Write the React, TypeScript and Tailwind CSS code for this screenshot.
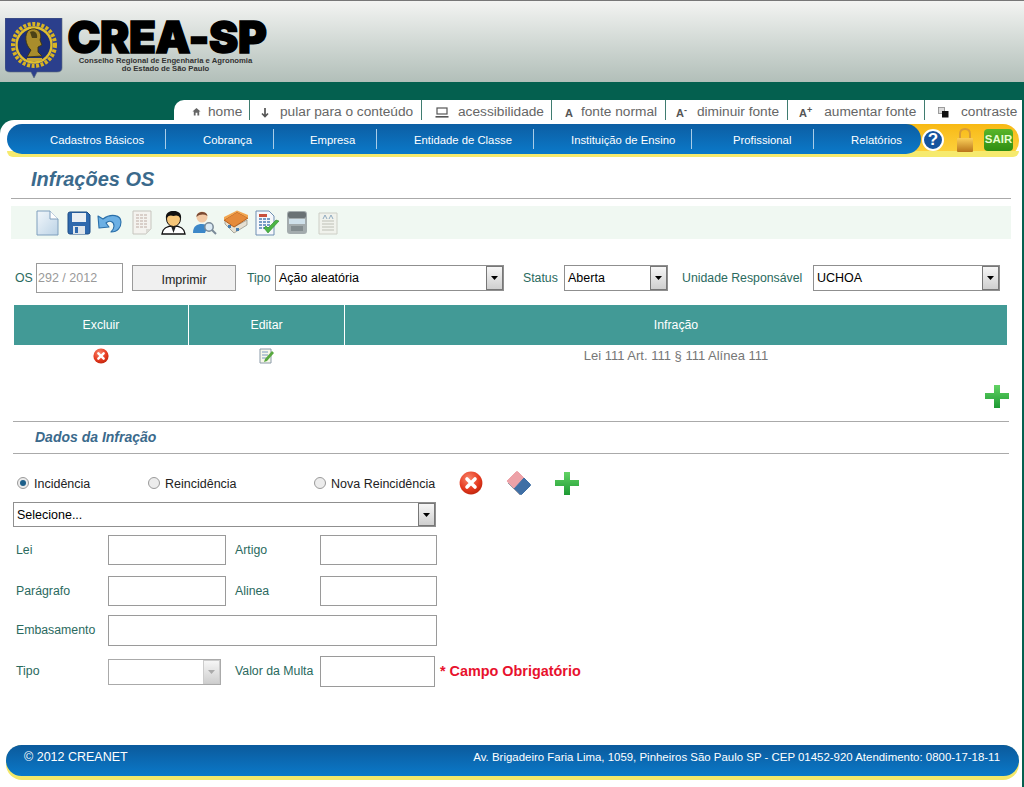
import React from 'react';

const font = { fontFamily: '"Liberation Sans", Arial, sans-serif' };

const tabs = [
  { label: 'home', w: 'w-[76px]', pl: 'pl-[18px]', gap: 'gap-[7px]', icon: 'home' },
  { label: 'pular para o conteúdo', w: 'w-[172px]', pl: 'pl-[10px]', gap: 'gap-[10px]', icon: 'down' },
  { label: 'acessibilidade', w: 'w-[130px]', pl: 'pl-[13px]', gap: 'gap-[9px]', icon: 'laptop' },
  { label: 'fonte normal', w: 'w-[114px]', pl: 'pl-[13px]', gap: 'gap-[8px]', icon: 'A' },
  { label: 'diminuir fonte', w: 'w-[122px]', pl: 'pl-[10px]', gap: 'gap-[10px]', icon: 'A-' },
  { label: 'aumentar fonte', w: 'w-[137px]', pl: 'pl-[11px]', gap: 'gap-[12px]', icon: 'A+' },
  { label: 'contraste', w: 'w-[97px]', pl: 'pl-[13px]', gap: 'gap-[12px]', icon: 'contrast' },
];

const menu = [
  { label: 'Cadastros Básicos', w: 'w-[159px]', pl: 'pl-[43px]' },
  { label: 'Cobrança', w: 'w-[108px]', pl: 'pl-[37px]' },
  { label: 'Empresa', w: 'w-[103px]', pl: 'pl-[36px]' },
  { label: 'Entidade de Classe', w: 'w-[157px]', pl: 'pl-[37px]' },
  { label: 'Instituição de Ensino', w: 'w-[158px]', pl: 'pl-[37px]' },
  { label: 'Profissional', w: 'w-[122px]', pl: 'pl-[41px]' },
  { label: 'Relatórios', w: 'w-[107px]', pl: 'pl-[37px]' },
];

const TabIcon = ({ name }: { name: string }) => {
  if (name === 'home')
    return (
      <svg width="9" height="9" viewBox="0 0 10 10" className="mt-[7px]">
        <path d="M0.5 5 L5 1 L9.5 5 L8 5 L8 9.5 L6 9.5 L6 6.5 L4 6.5 L4 9.5 L2 9.5 L2 5 Z" fill="#666" />
      </svg>
    );
  if (name === 'down')
    return (
      <svg width="10" height="11" viewBox="0 0 10 11" className="mt-[7px]">
        <path d="M5 1 V9 M2 6.5 L5 9.5 L8 6.5" stroke="#555" strokeWidth="1.7" fill="none" />
      </svg>
    );
  if (name === 'laptop')
    return (
      <svg width="14" height="11" viewBox="0 0 14 11" className="mt-[7px]">
        <rect x="2" y="1" width="10" height="6" fill="none" stroke="#555" strokeWidth="1.2" />
        <rect x="0.5" y="9" width="13" height="1.6" fill="#555" />
      </svg>
    );
  if (name === 'contrast')
    return (
      <svg width="11" height="11" viewBox="0 0 11 11" className="mt-[7px]">
        <rect x="0.5" y="0.5" width="6" height="6" fill="#ddd" stroke="#888" strokeWidth="0.8" />
        <rect x="4" y="4" width="6.5" height="6.5" fill="#111" />
      </svg>
    );
  return (
    <span className="mt-[7px] text-[11px] leading-[13px] font-bold text-[#555]">
      A{name === 'A-' ? <sup className="text-[9px] leading-none">-</sup> : null}
      {name === 'A+' ? <sup className="text-[9px] leading-none">+</sup> : null}
    </span>
  );
};

const Emblem = () => (
  <svg width="58" height="62" viewBox="0 0 58 62" className="shrink-0">
    <path d="M0 0 H57 V50 Q57 54 52 54 H32 L29 60 L26 54 H5 Q0 54 0 50 Z" fill="#2b3f8c" stroke="#5a6a7a" strokeWidth="0.6" />
    <circle cx="29" cy="27" r="21" fill="none" stroke="#d9b422" strokeWidth="4" strokeDasharray="3 1.6" />
    <circle cx="29" cy="27" r="17.5" fill="#1c2f78" stroke="#e0bf2e" strokeWidth="2.4" />
    <path d="M24 12 C32 8 38 15 35 22 L37 27 L33 29 L33 34 L37 38 L22 39 L26 32 C20 27 19 16 24 12 Z" fill="#a98d2c" stroke="#3b3413" strokeWidth="0.9" />
    <path d="M25 14 C29 12 33 15 32 20 L27 20 Z" fill="#4b4216" />
    <path d="M22 40 H37 V43 H22 Z" fill="#c9a93a" />
  </svg>
);

const DocIcon = () => (
  <svg width="23" height="26" viewBox="0 0 23 26">
    <defs>
      <linearGradient id="docg" x1="0" y1="0" x2="1" y2="1">
        <stop offset="0" stopColor="#f2f7fb" />
        <stop offset="1" stopColor="#bcd3e6" />
      </linearGradient>
    </defs>
    <path d="M1 1 H14 L22 9 V25 H1 Z" fill="url(#docg)" stroke="#7f9fbd" />
    <path d="M14 1 V9 H22" fill="#fff" stroke="#7f9fbd" />
  </svg>
);

const SaveIcon = () => (
  <svg width="24" height="24" viewBox="0 0 24 24">
    <path d="M1 3 Q1 1 3 1 H20 L23 4 V21 Q23 23 21 23 H3 Q1 23 1 21 Z" fill="#2f69ad" stroke="#1d4c85" />
    <rect x="5" y="2" width="14" height="9" fill="#e9eef3" />
    <rect x="6" y="15" width="12" height="8" fill="#dfe5ea" />
    <rect x="8" y="16" width="3" height="6" fill="#2f69ad" />
  </svg>
);

const UndoIcon = () => (
  <svg width="25" height="22" viewBox="0 0 25 22">
    <path d="M1 4 L2 16 L12 15 L9 11 C12 8 17 9 17 14 C17 16 16 18 14 20 C21 20 24 15 24 10 C24 3 14 1 6 7 Z" fill="#6cb0e4" stroke="#2a6fa9" strokeWidth="1.1" strokeLinejoin="round" />
  </svg>
);

const SheetIcon = () => (
  <svg width="22" height="25" viewBox="0 0 22 25" opacity="0.8">
    <path d="M2 1 H20 V19 L15 24 H2 Z" fill="#f5f3ef" stroke="#bdb9b2" />
    {[5, 8, 11, 14, 17].map((y) => (
      <path key={y} d={`M5 ${y} H17`} stroke="#c9b8b0" strokeWidth="1.4" strokeDasharray="3 1" />
    ))}
    <path d="M15 24 V19 H20 Z" fill="#d8d5cf" />
  </svg>
);

const PersonIcon = () => (
  <svg width="25" height="25" viewBox="0 0 25 25">
    <path d="M1 24 C2 17 7 16 12.5 16 C18 16 23 17 24 24 Z" fill="#fff" stroke="#111" strokeWidth="1.4" />
    <path d="M10 16 L12.5 23 L15 16 Z" fill="#222" />
    <ellipse cx="12.5" cy="9" rx="7" ry="7.5" fill="#f6c679" stroke="#111" />
    <path d="M5 9 C4 2 9 1 12.5 1 C17 1 21 3 20 9 C18 5 15 5 12.5 6 C10 5 7 5 5 9 Z" fill="#111" />
  </svg>
);

const UserSearchIcon = () => (
  <svg width="25" height="25" viewBox="0 0 25 25">
    <circle cx="10" cy="7" r="5.5" fill="#f2c9a5" />
    <path d="M4.5 7 C4 1 15 0 15.5 6 C12 4 8 4 4.5 7 Z" fill="#7a4a33" />
    <path d="M1 23 C1 16 5 14 10 14 C13 14 15 15 16 16 L13 23 Z" fill="#3c87c8" />
    <circle cx="17" cy="17" r="4.2" fill="#dcebf5" stroke="#7a8a98" strokeWidth="1.5" />
    <path d="M20 20 L24 24" stroke="#7a8a98" strokeWidth="2" />
  </svg>
);

const HouseIcon = () => (
  <svg width="26" height="25" viewBox="0 0 26 25">
    <path d="M2 14 L11 23 L24 15 V10 L11 17 L2 9 Z" fill="#e6e0d2" stroke="#8b8b80" strokeWidth="0.7" />
    <path d="M1 10 L14 2 L25 8 L11 17 Z" fill="#e58a3a" stroke="#b65e1c" />
    <path d="M1 7 L14 0.5 L25 5 L25 8 L14 2 L1 10 Z" fill="#f2a650" />
    <rect x="5" y="15" width="3" height="3" fill="#4a7fb0" />
    <rect x="13" y="18" width="3" height="3" fill="#4a7fb0" />
  </svg>
);

const CheckDocIcon = () => (
  <svg width="26" height="26" viewBox="0 0 26 26">
    <path d="M2 1 H15 L20 6 V25 H2 Z" fill="#f6f8fb" stroke="#6f8fb3" />
    <rect x="5" y="4" width="8" height="3" fill="#c9503c" />
    {[9, 12, 15, 18].map((y) => (
      <path key={y} d={`M5 ${y} H16`} stroke="#4f7fb5" strokeWidth="1.4" strokeDasharray="3 1" />
    ))}
    <path d="M10 18 L14 23 L25 11 L22 10 L14 18 L12 16 Z" fill="#4cb544" stroke="#2c8a2b" strokeWidth="0.6" />
  </svg>
);

const DriveIcon = () => (
  <svg width="22" height="25" viewBox="0 0 22 25">
    <rect x="1" y="1" width="20" height="23" rx="3" fill="#a3abad" />
    <rect x="2" y="2" width="18" height="6" rx="2" fill="#6a7275" />
    <rect x="3" y="9" width="16" height="5" fill="#cfe0ea" />
    <rect x="5" y="16" width="12" height="5" fill="#838c8f" />
  </svg>
);

const ReportIcon = () => (
  <svg width="20" height="25" viewBox="0 0 20 25" opacity="0.75">
    <path d="M1 3 H19 V24 H1 Z" fill="#f1f1ea" stroke="#c2c2b8" />
    <path d="M5 9 L7 5 L9 9 M11 9 L13 5 L15 9" stroke="#6f90b0" fill="none" />
    {[11, 14, 17, 20].map((y) => (
      <path key={y} d={`M4 ${y} H16`} stroke="#b9b9ae" strokeWidth="1.2" />
    ))}
  </svg>
);

const RemoveIcon = ({ size }: { size: number }) => (
  <svg width={size} height={size} viewBox="0 0 24 24">
    <defs>
      <radialGradient id="redg" cx="0.4" cy="0.3" r="0.8">
        <stop offset="0" stopColor="#f8856a" />
        <stop offset="0.6" stopColor="#e5391f" />
        <stop offset="1" stopColor="#b32008" />
      </radialGradient>
    </defs>
    <circle cx="12" cy="12" r="11.4" fill="url(#redg)" />
    <path d="M8 8 L16 16 M16 8 L8 16" stroke="#fff" strokeWidth="3.6" strokeLinecap="round" />
  </svg>
);

const PlusIcon = () => (
  <svg width="24" height="24" viewBox="0 0 24 24">
    <defs>
      <linearGradient id="plusg" x1="0" y1="0" x2="0" y2="1">
        <stop offset="0" stopColor="#63d365" />
        <stop offset="1" stopColor="#1d9a33" />
      </linearGradient>
    </defs>
    <path d="M9 1 H15 V9 H24 V15 H15 V24 H9 V15 H0 V9 H9 Z" fill="url(#plusg)" />
  </svg>
);

const EraserIcon = () => (
  <svg width="26" height="26" viewBox="0 0 26 26">
    <path d="M1 11 L10 2 Q11 1 12 2 L18 8 L8 19 Z" fill="#eda2a8" stroke="#eda2a8" strokeLinejoin="round" />
    <path d="M8 19 L18 8 L24 14 Q25 15 24 16 L16 24 Q15 25 14 24 Z" fill="#3f6fa5" stroke="#3f6fa5" strokeLinejoin="round" />
    <path d="M2 13 L8 19 L14 25" stroke="#9a9aa6" fill="none" />
  </svg>
);

const EditIcon = () => (
  <svg width="15" height="16" viewBox="0 0 15 16">
    <path d="M1 1 H12 V15 H1 Z" fill="#f7f7ea" stroke="#8a9aa8" />
    {[4, 7, 10].map((y) => (
      <path key={y} d={`M3 ${y} H9`} stroke="#7a9ac0" />
    ))}
    <path d="M6 11 L13 3 L15 5 L8 13 L5 14 Z" fill="#58a83e" />
  </svg>
);

const Select = ({ value, className, disabled }: { value: string; className: string; disabled?: boolean }) => (
  <div className={`flex items-stretch border border-[#8f8f8f] bg-white ${className}`}>
    <span className="flex-1 pl-[3px] text-[12.5px] leading-[24px] text-black whitespace-nowrap">{value}</span>
    <span
      className={`flex w-[17px] items-center justify-center border ${
        disabled ? 'border-[#ccc]' : 'border-[#777]'
      } bg-gradient-to-b from-[#f6f6f6] to-[#cfcfcf]`}
    >
      <svg width="7" height="4" viewBox="0 0 7 4">
        <path d="M0 0 H7 L3.5 4 Z" fill={disabled ? '#aaa' : '#000'} />
      </svg>
    </span>
  </div>
);

const Radio = ({ checked, label, className }: { checked?: boolean; label: string; className: string }) => (
  <div className={`flex items-center gap-[5px] ${className}`}>
    <span className="-mt-[3px] flex h-[12px] w-[12px] items-center justify-center rounded-full border border-[#9a9a9a] bg-[#ececec]">
      {checked ? <span className="h-[6px] w-[6px] rounded-full bg-[#1d5f8a]" /> : null}
    </span>
    <span className="text-[12.5px] text-[#222]">{label}</span>
  </div>
);

const Label = ({ children, className = '' }: { children: React.ReactNode; className?: string }) => (
  <span className={`text-[12.3px] text-[#2a6a5e] whitespace-nowrap ${className}`}>{children}</span>
);

const Field = ({ className }: { className: string }) => (
  <input className={`border border-[#9a9a9a] bg-white outline-none ${className}`} />
);

export default function App() {
  return (
    <div className="h-[787px] w-[1024px] overflow-hidden bg-[#04604f]" style={font}>
      {/* Header */}
      <header className="flex h-[82px] items-start border-t border-[#777] bg-gradient-to-b from-[#f3f4f2] to-[#b2bfb9] pl-[5px] pt-[17px]">
        <Emblem />
        <div className="ml-[4px] flex w-[200px] flex-col items-center">
          <div className="h-[38px] text-[44px] leading-[38px] font-black tracking-[-0.4px] text-black [font-family:Inter,sans-serif] [-webkit-text-stroke:1.5px_black]">
            CREA-SP
          </div>
          <div className="mt-[1px] -ml-[3px] text-center text-[7.7px] leading-[8px] font-bold text-[#333] whitespace-nowrap">
            Conselho Regional de Engenharia e Agronomia
            <br />
            do Estado de São Paulo
          </div>
        </div>
      </header>

      {/* Links de acessibilidade */}
      <div className="flex h-[38px] justify-end pt-[18px]">
        <nav className="mr-[2px] flex h-[20px] items-stretch rounded-tl-[10px] bg-white">
          {tabs.map((t, i) => (
            <div
              key={t.label}
              className={`flex ${t.w} ${t.pl} ${t.gap} items-start text-[13.7px] leading-[20px] text-[#666] whitespace-nowrap ${
                i < tabs.length - 1 ? 'border-r border-[#3f7c70]' : ''
              }`}
            >
              <TabIcon name={t.icon} />
              <span className="pt-[2px]">{t.label}</span>
            </div>
          ))}
        </nav>
      </div>

      {/* Pagina */}
      <main className="mr-[2px] h-[667px] rounded-tl-[14px] bg-white pt-[4px]">
        <div className="relative mr-[3px] ml-[7px] h-[33px]">
          <div className="absolute inset-y-0 right-0 w-[140px] rounded-r-[16px] bg-gradient-to-b from-[#f8b912] to-[#fdd53f]" />
          <div className="absolute inset-x-0 bottom-0 h-[6px] rounded-b-[14px] bg-[#f6ea6e]" />
          <div className="relative flex h-[30px] w-[914px] items-center rounded-[16px] bg-gradient-to-b from-[#0c5ea3] to-[#0a79c9]">
            {menu.map((m, i) => (
              <div
                key={m.label}
                className={`flex h-[20px] shrink-0 items-center ${m.w} ${m.pl} pt-[2px] text-[11.3px] text-white whitespace-nowrap ${
                  i < menu.length - 1 ? 'border-r border-[#a9cde8]' : ''
                }`}
              >
                {m.label}
              </div>
            ))}
          </div>
          <div className="absolute right-[6px] top-0 flex h-[32px] items-center">
            <span className="flex h-[22px] w-[22px] items-center justify-center rounded-full border-2 border-white bg-[#17549e] text-[17px] font-bold text-white">
              ?
            </span>
            <svg width="20" height="26" viewBox="0 0 20 26" className="ml-[11px]">
              <defs>
                <linearGradient id="lockg" x1="0" y1="0" x2="0" y2="1">
                  <stop offset="0" stopColor="#fbd05a" />
                  <stop offset="1" stopColor="#b97419" />
                </linearGradient>
              </defs>
              <path d="M5 12 V7 Q5 2 10 2 Q15 2 15 7 V12" fill="none" stroke="#d89c37" strokeWidth="2" />
              <rect x="2" y="11" width="16" height="14" rx="1" fill="url(#lockg)" />
            </svg>
            <span className="ml-[9px] flex h-[22px] w-[29px] items-center justify-center rounded-[4px] bg-gradient-to-b from-[#58b52a] to-[#2e8e12] text-[11.5px] font-bold text-[#e8ffd0]">
              SAIR
            </span>
          </div>
        </div>

        <h1 className="mt-[10px] ml-[31px] text-[20px] leading-[24px] font-bold text-[#3b6a8c] italic">Infrações OS</h1>
        <div className="mx-[11px] mt-[7px] border-t border-[#aaa]" />
        <div className="mx-[11px] mt-[7px] flex h-[33px] items-center bg-[#f0f8f2] pl-[25px]">
          <span className="w-[31px]"><DocIcon /></span>
          <span className="w-[30px]"><SaveIcon /></span>
          <span className="w-[34px]"><UndoIcon /></span>
          <span className="w-[30px]"><SheetIcon /></span>
          <span className="w-[31px]"><PersonIcon /></span>
          <span className="w-[31px]"><UserSearchIcon /></span>
          <span className="w-[31px]"><HouseIcon /></span>
          <span className="w-[32px]"><CheckDocIcon /></span>
          <span className="w-[32px]"><DriveIcon /></span>
          <ReportIcon />
        </div>

        {/* Filtros */}
        <div className="mt-[24px] flex h-[30px] items-center pl-[15px]">
          <Label className="w-[21px]">OS</Label>
          <input
            readOnly
            value="292 / 2012"
            className="h-[30px] w-[87px] border border-[#9a9a9a] pl-[1px] text-[12.5px] text-[#999] outline-none"
          />
          <button className="ml-[9px] h-[26px] w-[104px] border border-[#9a9a9a] bg-[#f0f0f0] pt-[4px] text-[12.5px] text-[#222]">
            Imprimir
          </button>
          <Label className="ml-[11px] w-[28px]">Tipo</Label>
          <Select value="Ação aleatória" className="h-[26px] w-[229px]" />
          <Label className="ml-[19px] w-[41px]">Status</Label>
          <Select value="Aberta" className="h-[26px] w-[104px]" />
          <Label className="ml-[14px] w-[131px]">Unidade Responsável</Label>
          <Select value="UCHOA" className="h-[26px] w-[187px]" />
        </div>

        {/* Tabela */}
        <div className="mt-[12px] ml-[14px] w-[993px]">
          <div className="flex h-[40px] items-center bg-[#429a96] text-[12.3px] text-white">
            <div className="flex h-full w-[175px] items-center justify-center border-r border-white">Excluir</div>
            <div className="flex h-full w-[156px] items-center justify-center border-r border-white">Editar</div>
            <div className="flex-1 text-center">Infração</div>
          </div>
          <div className="flex h-[21px] items-center text-[13px] text-[#777]">
            <div className="flex w-[174px] justify-center"><RemoveIcon size={16} /></div>
            <div className="flex w-[157px] justify-center"><EditIcon /></div>
            <div className="flex-1 text-center">Lei 111 Art. 111 § 111 Alínea 111</div>
          </div>
        </div>
        <div className="mt-[18px] mr-[13px] flex justify-end"><PlusIcon /></div>
        <div className="mx-[13px] mt-[13px] border-t border-[#aaa]" />
        <h2 className="mt-[7px] ml-[35px] text-[14px] leading-[16px] font-bold text-[#3b6a8c] italic">Dados da Infração</h2>
        <div className="mx-[13px] mt-[8px] border-t border-[#aaa]" />

        {/* Formulario */}
        <div className="mt-[16px] flex h-[28px] items-center pl-[17px]">
          <Radio checked label="Incidência" className="w-[131px]" />
          <Radio label="Reincidência" className="w-[166px]" />
          <Radio label="Nova Reincidência" className="w-[145px]" />
          <span className="-mt-[3px] w-[47px]"><RemoveIcon size={24} /></span>
          <span className="-mt-[3px] w-[49px]"><EraserIcon /></span>
          <span className="-mt-[3px]"><PlusIcon /></span>
        </div>
        <div className="ml-[13px] mt-[4px]">
          <Select value="Selecione..." className="h-[25px] w-[423px]" />
        </div>

        <div className="ml-[16px] mt-[8px] flex h-[30px] items-center">
          <Label className="w-[92px]">Lei</Label>
          <Field className="h-[30px] w-[118px]" />
          <Label className="ml-[9px] w-[85px]">Artigo</Label>
          <Field className="h-[30px] w-[117px]" />
        </div>
        <div className="ml-[16px] mt-[11px] flex h-[30px] items-center">
          <Label className="w-[92px]">Parágrafo</Label>
          <Field className="h-[30px] w-[118px]" />
          <Label className="ml-[9px] w-[85px]">Alinea</Label>
          <Field className="h-[30px] w-[117px]" />
        </div>
        <div className="ml-[16px] mt-[9px] flex h-[31px] items-center">
          <Label className="w-[92px]">Embasamento</Label>
          <Field className="h-[31px] w-[329px]" />
        </div>
        <div className="ml-[16px] mt-[10px] flex h-[31px] items-center">
          <Label className="w-[92px]">Tipo</Label>
          <Select value="" disabled className="h-[26px] w-[113px] border-[#aaa]" />
          <Label className="ml-[14px] w-[85px]">Valor da Multa</Label>
          <Field className="h-[31px] w-[115px]" />
          <span className="ml-[5px] text-[14.4px] font-bold text-[#e8112d]">* Campo Obrigatório</span>
        </div>

        {/* Rodape */}
        <footer className="mr-[3px] ml-[6px] mt-[58px] h-[35px] rounded-[16px] bg-[#f3e86a]">
          <div className="flex h-[31px] items-center justify-between rounded-[16px] bg-gradient-to-b from-[#0b5a9c] to-[#0a79c9] pr-[19px] pb-[6px] pl-[18px] text-white">
            <span className="text-[12.5px]">© 2012 CREANET</span>
            <span className="text-[11.45px]">Av. Brigadeiro Faria Lima, 1059, Pinheiros São Paulo SP - CEP 01452-920 Atendimento: 0800-17-18-11</span>
          </div>
        </footer>
      </main>
    </div>
  );
}
